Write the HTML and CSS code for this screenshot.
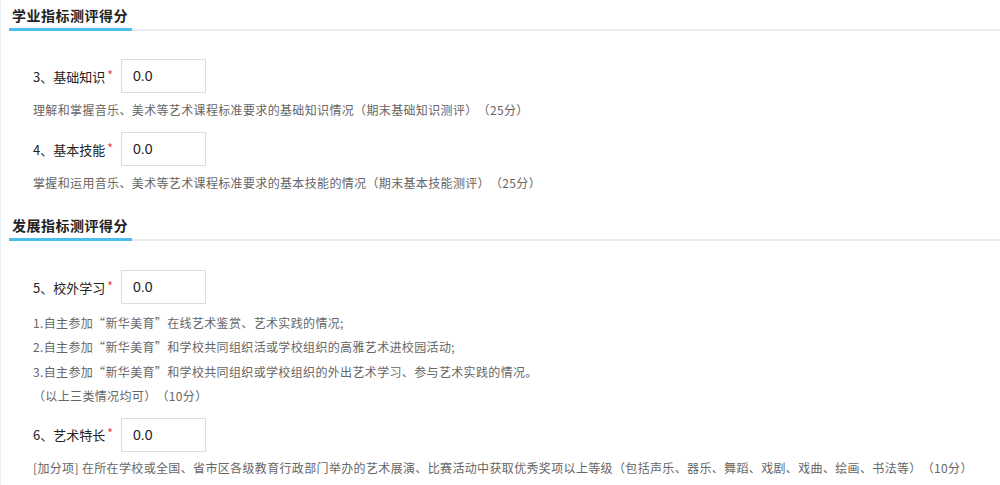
FILE: index.html
```html
<!DOCTYPE html>
<html lang="zh-CN">
<head>
<meta charset="utf-8">
<title>测评得分</title>
<link rel="stylesheet" href="styles.css">
</head>
<body>
<div class="page">
  <div class="section-head"><span class="section-title">学业指标测评得分</span></div>

  <div class="field f3">
    <label class="field-label">3、基础知识<span class="req">*</span></label>
    <input class="field-input" type="text" value="0.0">
  </div>
  <div class="desc d-short">理解和掌握音乐、美术等艺术课程标准要求的基础知识情况（期末基础知识测评）（25分）</div>

  <div class="field f4">
    <label class="field-label">4、基本技能<span class="req">*</span></label>
    <input class="field-input" type="text" value="0.0">
  </div>
  <div class="desc d-short">掌握和运用音乐、美术等艺术课程标准要求的基本技能的情况（期末基本技能测评）（25分）</div>

  <div class="section-head second"><span class="section-title">发展指标测评得分</span></div>

  <div class="field f5">
    <label class="field-label">5、校外学习<span class="req">*</span></label>
    <input class="field-input" type="text" value="0.0">
  </div>
  <div class="desc d-list">
    <div>1.自主参加“新华美育”在线艺术鉴赏、艺术实践的情况;</div>
    <div>2.自主参加“新华美育”和学校共同组织活或学校组织的高雅艺术进校园活动;</div>
    <div>3.自主参加“新华美育”和学校共同组织或学校组织的外出艺术学习、参与艺术实践的情况。</div>
    <div>（以上三类情况均可）（10分）</div>
  </div>

  <div class="field f6">
    <label class="field-label">6、艺术特长<span class="req">*</span></label>
    <input class="field-input" type="text" value="0.0">
  </div>
  <div class="desc d-last">[加分项] 在所在学校或全国、省市区各级教育行政部门举办的艺术展演、比赛活动中获取优秀奖项以上等级（包括声乐、器乐、舞蹈、戏剧、戏曲、绘画、书法等）（10分）</div>
</div>
</body>
</html>
```

FILE: styles.css
```css
html, body {
  margin: 0;
  padding: 0;
  background: #ffffff;
}
body {
  font-family: "Noto Sans CJK SC", "Liberation Sans", sans-serif;
  color: #333333;
  width: 1000px;
  height: 485px;
  overflow: hidden;
  text-spacing-trim: space-all;
}
.page {
  border-left: 1px solid #e4eef5;
  height: 485px;
  box-sizing: border-box;
}
.section-head {
  margin-left: 8px;
  border-bottom: 2px solid #e6ecef;
  height: 29px;
  display: flex;
  align-items: flex-end;
}
.section-head.second {
  margin-top: 15px;
}
.section-title {
  display: block;
  font-size: 14px;
  font-weight: bold;
  color: #222222;
  line-height: 26px;
  padding: 0 4px 0 3px;
  border-bottom: 3px solid #4bbdef;
  margin-bottom: -2px;
  letter-spacing: 0.5px;
}
.field {
  display: flex;
  align-items: center;
  padding-left: 32px;
  height: 34px;
}
.f3 { margin-top: 28px; }
.f4 { margin-top: 10px; }
.f5 { margin-top: 29px; }
.f6 { margin-top: 9px; }
.field-label {
  width: 88px;
  font-size: 13px;
  color: #222222;
  white-space: nowrap;
}
.req {
  color: #e4393c;
  font-size: 12px;
  margin-left: 2px;
  position: relative;
  top: -2px;
}
.field-input {
  box-sizing: border-box;
  width: 85px;
  height: 34px;
  border: 1px solid #d6dee2;
  border-radius: 0;
  padding: 0 0 0 11px;
  margin: 0;
  font-family: "Liberation Sans", "Noto Sans CJK SC", sans-serif;
  font-size: 14px;
  color: #222222;
  outline: none;
  background: #ffffff;
}
.desc {
  padding-left: 32px;
  font-size: 12px;
  line-height: 24px;
  color: #666666;
  letter-spacing: 0.35px;
  white-space: nowrap;
}
.d-short { margin-top: 5px; }
.d-list { margin-top: 7px; line-height: 24.4px; }
.d-last { margin-top: 4px; }
```
